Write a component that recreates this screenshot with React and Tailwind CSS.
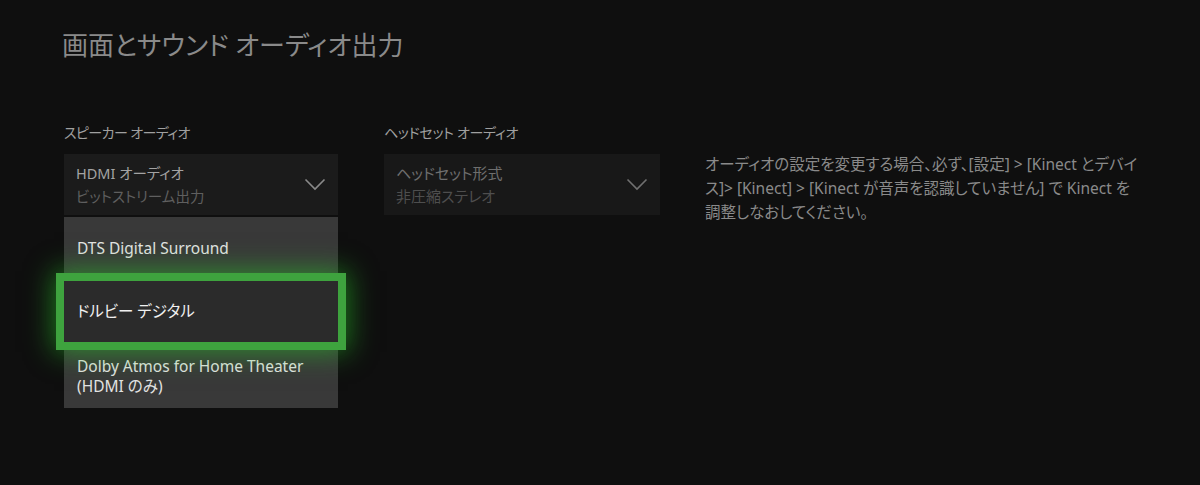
import React from "react";

const font = "font-['Noto_Sans','Noto_Sans_CJK_JP',sans-serif] [font-feature-settings:'palt']";

function Chevron({ color = "#8a8a8a" }) {
  return (
    <svg width="22" height="13" viewBox="0 0 22 13" fill="none">
      <polyline points="1.5,1.5 11,11 20.5,1.5" stroke={color} strokeWidth="1.6" />
    </svg>
  );
}

export default function App() {
  return (
    <div className={`w-[1200px] h-[485px] bg-[#0f0f0f] pl-[62px] pt-[27px] ${font}`}>
      <h1 className="text-[26px] leading-[36px] text-[#8a8a8a] font-normal">
        画面とサウンド オーディオ出力
      </h1>
      <div className="flex mt-[60px] pl-[2px]">
        {/* Speaker column */}
        <div className="w-[274px] flex flex-col">
          <div className="text-[14px] leading-[20px] tracking-[-0.6px] text-[#a0a0a0] mb-[11px]">スピーカー オーディオ</div>
          <div className="h-[61px] bg-[#1b1b1b] flex items-center justify-between pl-[12px] pr-[12px]">
            <div className="flex flex-col">
              <span className="text-[14.5px] leading-[23px] text-[#a3a3a3]">HDMI オーディオ</span>
              <span className="text-[14.5px] leading-[23px] text-[#5f5f5f]">ビットストリーム出力</span>
            </div>
            <Chevron />
          </div>
          <div className="mt-[2px] bg-[#393939] flex flex-col">
            <div className="h-[64px] flex items-center pl-[13px] text-[15.5px] text-[#e2e2e2]">DTS Digital Surround</div>
            <div className="relative z-10 h-[61px] flex items-center pl-[13px] text-[15.5px] text-[#f0f0f0] bg-[#2b2b2b] outline outline-[8px] outline-[#3ea33e] shadow-[0_0_26px_10px_rgba(40,210,40,0.55)]">
              ドルビー デジタル
            </div>
            <div className="h-[66px] flex items-center pl-[13px] pt-[2px] text-[15.5px] leading-[20px] text-[#e2e2e2]">
              Dolby Atmos for Home Theater
              <br />
              (HDMI のみ)
            </div>
          </div>
        </div>

        {/* Headset column */}
        <div className="w-[276px] ml-[46px] flex flex-col">
          <div className="text-[14px] leading-[20px] tracking-[-0.3px] text-[#a0a0a0] mb-[11px]">ヘッドセット オーディオ</div>
          <div className="h-[61px] bg-[#181818] flex items-center justify-between pl-[12px] pr-[12px]">
            <div className="flex flex-col">
              <span className="text-[15px] leading-[23px] text-[#6e6e6e]">ヘッドセット形式</span>
              <span className="text-[15px] leading-[23px] text-[#4e4e4e]">非圧縮ステレオ</span>
            </div>
            <Chevron color="#707070" />
          </div>
        </div>

        {/* Help text */}
        <div className="ml-[45px] pt-[29px] text-[15.5px] leading-[24px] text-[#8a8a8a]">
          <div className="whitespace-nowrap">オーディオの設定を変更する場合、必ず、[設定] &gt; [Kinect とデバイ</div>
          <div className="whitespace-nowrap">ス]&gt; [Kinect] &gt; [Kinect が音声を認識していません] で Kinect を</div>
          <div className="whitespace-nowrap">調整しなおしてください。</div>
        </div>
      </div>
    </div>
  );
}
